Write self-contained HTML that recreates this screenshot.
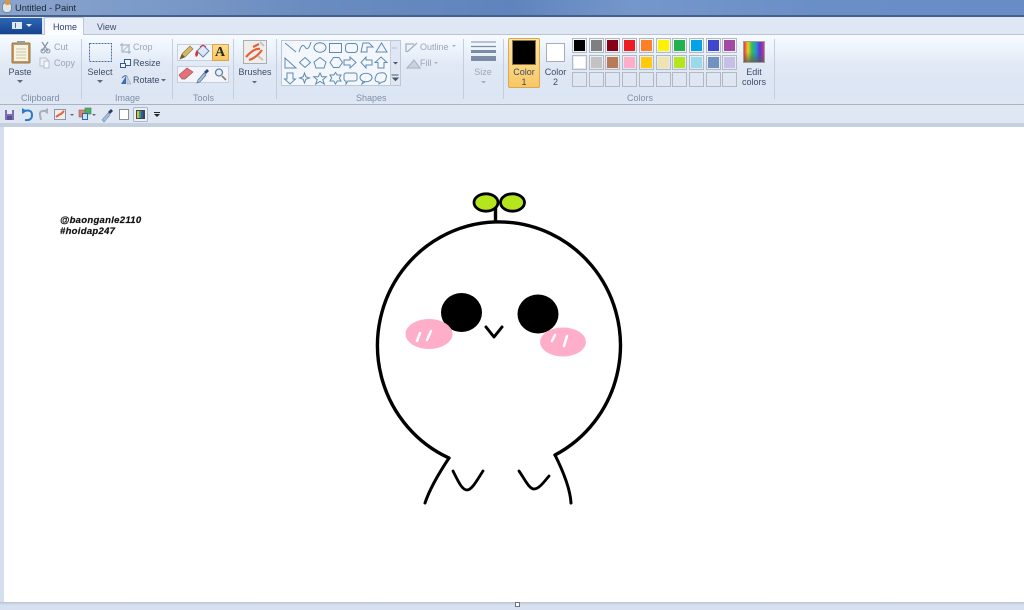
<!DOCTYPE html>
<html><head><meta charset="utf-8">
<style>
html,body{margin:0;padding:0;background:#d3deef;}
#r{position:relative;width:1024px;height:610px;overflow:hidden;font-family:"Liberation Sans",sans-serif;background:#d3deef;filter:blur(.3px);}
.a{position:absolute;}
.t{position:absolute;font-size:9px;color:#3c4c66;white-space:nowrap;line-height:10px;}
.c{text-align:center;}
.g{color:#9aa6b8;}
.l{position:absolute;font-size:9px;color:#7f8ea6;top:93px;line-height:10px;white-space:nowrap;}
.s{position:absolute;width:1px;top:39px;height:60px;background:#c3cedf;}
.sw{position:absolute;width:15px;height:15px;box-sizing:border-box;border:1px solid #b4b8bf;}
.sw i{position:absolute;left:1px;top:1px;width:11px;height:11px;border:0;display:block;}
svg{position:absolute;left:0;top:0;}
</style></head><body><div id="r">
<div class="a" style="left:0;top:0;width:1024px;height:16px;background:linear-gradient(90deg,#8ba4cc 0,#7b9ac8 15%,#6a8cc0 30%,#5f84bd 50%,#7597cb 62%,#6a8ec6 80%,#688cc6 100%);"></div>
<div class="a" style="left:0;top:15px;width:1024px;height:2px;background:#45608a;"></div>
<div class="a" style="left:0;top:17px;width:1024px;height:18px;background:#dfe7f4;"></div>
<div class="a" style="left:0;top:34px;width:1024px;height:1px;background:#b9c3d3;"></div>
<div class="a" style="left:0;top:35px;width:1024px;height:69px;background:linear-gradient(180deg,#f7fbff 0,#edf4fc 18%,#e0e8f5 45%,#dce5f3 85%,#dfe7f4 100%);"></div>
<div class="a" style="left:0;top:104px;width:1024px;height:1px;background:#a9b4c6;"></div>
<div class="a" style="left:0;top:105px;width:1024px;height:18px;background:#dfe7f3;"></div>
<div class="a" style="left:0;top:123px;width:1024px;height:4px;background:#c4cfe0;"></div>
<div class="a" style="left:0;top:127px;width:4px;height:483px;background:#d3deef;"></div>
<div class="a" style="left:4px;top:127px;width:1020px;height:475px;background:#fff;"></div>
<div class="a" style="left:0;top:602px;width:1024px;height:8px;background:linear-gradient(180deg,#b8c4d6,#d6e0f0 40%);"></div>
<div class="a" style="left:515px;top:602px;width:3px;height:3px;background:#fff;border:1px solid #6b7280;"></div>

<div class="t" style="left:15px;top:3px;font-size:9.300px;color:#1b2433;">Untitled - Paint</div>
<div class="a" style="left:2px;top:2px;width:8px;height:9px;background:#dfe5e8;border-radius:4px;border:1px solid #6f8f99;"></div>
<div class="a" style="left:5px;top:0;width:5px;height:5px;background:#d89a3a;border-radius:2px;"></div>

<div class="a" style="left:0;top:18px;width:42px;height:16px;background:linear-gradient(180deg,#2e66b4,#16438e);"></div>
<div class="a" style="left:12px;top:22px;width:10px;height:7px;background:#dfe8f5;"></div>
<div class="a" style="left:15px;top:23px;width:1px;height:5px;background:#3a68ad;"></div>
<div class="a" style="left:26px;top:24px;width:0;height:0;border:3px solid transparent;border-top:3px solid #e6eefa;"></div>
<div class="a" style="left:44px;top:17px;width:40px;height:18px;background:linear-gradient(180deg,#f4f8fd,#fbfdff);border:1px solid #bcc6d6;border-bottom:0;box-sizing:border-box;border-radius:2px 2px 0 0;"></div>
<div class="t" style="left:53px;top:22px;font-size:9px;color:#2c3f5e;">Home</div>
<div class="t" style="left:97px;top:22px;font-size:9px;color:#3c4c66;">View</div>

<!-- separators -->
<div class="s" style="left:81px;"></div><div class="s" style="left:172px;"></div><div class="s" style="left:233px;"></div><div class="s" style="left:276px;"></div><div class="s" style="left:463px;"></div><div class="s" style="left:503px;"></div><div class="s" style="left:774px;"></div>

<!-- labels -->
<div class="l" style="left:21px;">Clipboard</div><div class="l" style="left:115px;">Image</div><div class="l" style="left:193px;">Tools</div><div class="l" style="left:356px;">Shapes</div><div class="l" style="left:627px;">Colors</div>

<div class="t c" style="left:5px;width:30px;top:67px;">Paste</div>
<div class="t g" style="left:54px;top:42px;">Cut</div>
<div class="t g" style="left:54px;top:58px;">Copy</div>
<div class="t c" style="left:85px;width:30px;top:67px;">Select</div>
<div class="t g" style="left:133px;top:42px;">Crop</div>
<div class="t" style="left:133px;top:58px;">Resize</div>
<div class="t" style="left:133px;top:75px;">Rotate</div>
<div class="t c" style="left:235px;width:40px;top:67px;">Brushes</div>
<div class="t g" style="left:420px;top:42px;">Outline</div>
<div class="t g" style="left:420px;top:58px;">Fill</div>
<div class="t c g" style="left:468px;width:30px;top:67px;">Size</div>

<!-- tools box -->
<div class="a" style="left:177px;top:44px;width:52px;height:17px;background:#f1f5fb;border:1px solid #c5cedd;box-sizing:border-box;"></div>
<div class="a" style="left:177px;top:66px;width:52px;height:17px;background:#f1f5fb;border:1px solid #c5cedd;box-sizing:border-box;"></div>
<div class="a" style="left:212px;top:44px;width:17px;height:17px;background:linear-gradient(180deg,#fddc90,#f9c660);border:1px solid #d9a64a;box-sizing:border-box;"></div>
<div class="t" style="left:215px;top:44px;font:bold 14px/17px 'Liberation Serif',serif;color:#2a2a22;">A</div>

<!-- shapes box -->
<div class="a" style="left:281px;top:40px;width:120px;height:46px;background:#f3f7fc;border:1px solid #bcc7d8;box-sizing:border-box;"></div>
<div class="a" style="left:390px;top:41px;width:10px;height:44px;background:#dfe7f3;border-left:1px solid #c3cddd;box-sizing:border-box;"></div>

<!-- color 1/2 -->
<div class="a" style="left:508px;top:38px;width:32px;height:50px;background:linear-gradient(180deg,#fde4a6,#f9c764);border:1px solid #dba850;box-sizing:border-box;border-radius:2px;"></div>
<div class="a" style="left:512px;top:40px;width:24px;height:25px;background:#000;border:1px solid #8a7440;box-sizing:border-box;"></div>
<div class="t c" style="left:508px;width:32px;top:67px;line-height:10px;">Color<br>1</div>
<div class="a" style="left:546px;top:43px;width:19px;height:19px;background:#fff;border:1px solid #a9aeb6;box-sizing:border-box;"></div>
<div class="t c" style="left:540px;width:31px;top:67px;line-height:10px;">Color<br>2</div>

<!-- palette -->
<div class="sw" style="left:572px;top:38px;"><i style="background:#000"></i></div>
<div class="sw" style="left:589px;top:38px;"><i style="background:#7f7f7f"></i></div>
<div class="sw" style="left:605px;top:38px;"><i style="background:#880015"></i></div>
<div class="sw" style="left:622px;top:38px;"><i style="background:#ed1c24"></i></div>
<div class="sw" style="left:639px;top:38px;"><i style="background:#ff7f27"></i></div>
<div class="sw" style="left:656px;top:38px;"><i style="background:#fff200"></i></div>
<div class="sw" style="left:672px;top:38px;"><i style="background:#22b14c"></i></div>
<div class="sw" style="left:689px;top:38px;"><i style="background:#00a2e8"></i></div>
<div class="sw" style="left:706px;top:38px;"><i style="background:#3f48cc"></i></div>
<div class="sw" style="left:722px;top:38px;"><i style="background:#a349a4"></i></div>
<div class="sw" style="left:572px;top:55px;"><i style="background:#fff"></i></div>
<div class="sw" style="left:589px;top:55px;"><i style="background:#c3c3c3"></i></div>
<div class="sw" style="left:605px;top:55px;"><i style="background:#b97a57"></i></div>
<div class="sw" style="left:622px;top:55px;"><i style="background:#ffaec9"></i></div>
<div class="sw" style="left:639px;top:55px;"><i style="background:#ffc90e"></i></div>
<div class="sw" style="left:656px;top:55px;"><i style="background:#efe4b0"></i></div>
<div class="sw" style="left:672px;top:55px;"><i style="background:#b5e61d"></i></div>
<div class="sw" style="left:689px;top:55px;"><i style="background:#99d9ea"></i></div>
<div class="sw" style="left:706px;top:55px;"><i style="background:#7092be"></i></div>
<div class="sw" style="left:722px;top:55px;"><i style="background:#c8bfe7"></i></div>
<div class="sw" style="left:572px;top:72px;"></div><div class="sw" style="left:589px;top:72px;"></div><div class="sw" style="left:605px;top:72px;"></div><div class="sw" style="left:622px;top:72px;"></div><div class="sw" style="left:639px;top:72px;"></div><div class="sw" style="left:656px;top:72px;"></div><div class="sw" style="left:672px;top:72px;"></div><div class="sw" style="left:689px;top:72px;"></div><div class="sw" style="left:706px;top:72px;"></div><div class="sw" style="left:722px;top:72px;"></div>
<div class="a" style="left:743px;top:41px;width:22px;height:22px;box-sizing:border-box;border:1px solid #a79a9a;background:linear-gradient(180deg,rgba(255,255,255,0) 50%,rgba(90,90,90,.75)),linear-gradient(90deg,#e23a3a,#e6d02a,#2fbf4a,#2a8fe0,#5a35c8,#c83a9a);"></div>
<div class="t c" style="left:739px;width:30px;top:67px;line-height:10px;">Edit<br>colors</div>

<svg width="1024" height="610" viewBox="0 0 1024 610" fill="none">
<!-- paste -->
<rect x="12" y="43" width="18" height="20" rx="1" fill="#c49a63" stroke="#9b7440"/>
<rect x="14" y="45" width="14" height="16" fill="#f8f3df"/>
<rect x="17" y="41" width="8" height="4" fill="#a09a88"/>
<path d="M16 49h10M16 52h10M16 55h10M16 58h10" stroke="#c9c3a8"/>
<path d="M17 80l3 3 3-3z" fill="#5a6a80"/>
<path d="M42 42l6 9M48 42l-6 9" stroke="#8a97aa" stroke-width="1.300"/>
<circle cx="43" cy="51" r="2" stroke="#8a97aa"/><circle cx="48" cy="51" r="2" stroke="#8a97aa"/>
<path d="M40 58h6l2 2v6h-8z" stroke="#b6c0cf" fill="#eef2f8"/><path d="M44 61h5v7h-5z" stroke="#b6c0cf" fill="#f4f6fa"/>
<!-- select -->
<rect x="89.500" y="43.500" width="22" height="18" stroke="#4a6fa5" stroke-dasharray="2 1"/>
<path d="M97 80l3 3 3-3z" fill="#5a6a80"/>
<!-- crop -->
<path d="M122 43v9h9M120 45h9v9" stroke="#9aa8bb"/><path d="M123 51l7-7" stroke="#b6c0cf"/>
<!-- resize -->
<rect x="124.500" y="59.500" width="6" height="6" stroke="#2f5c9c" fill="#f3f7fc"/><rect x="120.500" y="63.500" width="5" height="4" stroke="#2f5c9c" fill="#f3f7fc"/>
<!-- rotate -->
<path d="M121 84l5-8v8z" fill="#3a6fb0"/><path d="M127 76l4 8h-4z" fill="#c9d2df" stroke="#8a97aa" stroke-width=".5"/><path d="M122 78q2-3 5-2" stroke="#3a6fb0"/>
<path d="M161 79l2.500 2.500 2.500-2.500z" fill="#5a6a80"/>
<!-- tools -->
<path d="M180 59l2-5 8-8 3 3-8 8z" fill="#d8b860" stroke="#8a7a50" stroke-width=".7"/><path d="M180 59l2-5 3 3z" fill="#6a5a40"/>
<path d="M197 51l6-6 6 6-6 6z" fill="#dfe8f4" stroke="#5f86b8"/><path d="M197 50q-3 4-1 7 3-2 2-5z" fill="#d2342c"/><path d="M200 47q3-3 6 0" stroke="#d2342c"/>
<path d="M179 75l8-7 6 4-8 7h-3z" fill="#e4707a" stroke="#a8555d" stroke-width=".7"/>
<path d="M198 80l6-7 2 2-6 7-3 1z" fill="#9fc4e4" stroke="#5a6a80" stroke-width=".7"/><path d="M204 72l3-3 2 2-3 3z" fill="#2a4a7c"/>
<circle cx="219" cy="72.500" r="3.500" stroke="#5e7fa8" fill="#e8f1fa" stroke-width="1.300"/><path d="M222 76l4 4" stroke="#8a7a60" stroke-width="1.600"/>
<!-- brushes -->
<rect x="243.500" y="40.500" width="23" height="23" fill="#f0eeea" stroke="#a9aeb6"/>
<path d="M246 57q8-9 14-8M249 60q7-2 13-10M253 47l6-3" stroke="#e2603a" stroke-width="2.200"/><path d="M260 42l4 4M258 56l5 4" stroke="#c3c3c3" stroke-width="2"/>
<path d="M252 81l2.500 2.500 2.500-2.500z" fill="#5a6a80"/>
<!-- shapes -->
<g stroke="#5f8bb0" stroke-width="1">
<path d="M285 43l11 9M299 52q3-10 6-5t6-5"/>
<ellipse cx="320" cy="47.500" rx="6" ry="4.800"/><rect x="329.500" y="43.500" width="12" height="9"/><rect x="345.500" y="43.500" width="12" height="9" rx="3"/>
<path d="M361 52l2-9h6l4 4h-6v5zM376 52l5.500-9 5.500 9z"/>
<path d="M285 68V58l11 10zM305 57.500l5.500 5-5.500 5-5.500-5zM320 57.500l6 4.500-2 6h-8l-2-6zM330 62.500l3.500-5h5.500l3.500 5-3.500 5h-5.500z"/>
<path d="M344 60h6v-3l6 5.500-6 5.500v-3h-6zM372 60h-6v-3l-5 5.500 5 5.500v-3h6zM381 57l6 5.500h-3v5.500h-6v-5.500h-3z"/>
<path d="M287 73h6v6h2.500l-5.500 5-5.500-5h2.500zM304.500 73l1.300 3.700 3.700 1.300-3.700 1.300-1.300 3.700-1.300-3.700-3.700-1.300 3.700-1.300z"/>
<path d="M320 73l1.800 3.700h4.500l-3.500 3 1.500 4.300-4.300-2.500-4.300 2.500 1.500-4.300-3.500-3h4.500z"/>
<path d="M335.500 72.500l1.700 2.500h3.800l-1.700 3 1.700 3h-3.800l-1.700 3-1.700-3h-3.800l1.700-3-1.700-3h3.800z"/>
<path d="M346 73h9a2 2 0 0 1 2 2v4a2 2 0 0 1-2 2h-7l-2 3v-3a2 2 0 0 1-2-2v-4a2 2 0 0 1 2-2z"/>
<ellipse cx="366" cy="77.500" rx="6" ry="4.300"/><path d="M363 81.500l-1 2.500 3-2"/>
<path d="M376 76q1-3 4-3 5-1 6 2 1 1 0 3 0 4-4 4l-3 2v-2q-4 0-4-3z"/>
</g>
<path d="M392 48h5" stroke="#b6c0cf"/><path d="M393 62l2.500 2.500 2.500-2.500z" fill="#4a5568"/><path d="M391.500 75h7M393 78l2.500 2.500 2.500-2.500z" stroke="#4a5568" fill="#4a5568"/>
<!-- outline fill -->
<path d="M406 52v-8h8M407 52l10-9" stroke="#a5b0c0" stroke-width="1.300"/>
<path d="M407 68l7-8 6 8z" fill="#c9d2df" stroke="#a5b0c0"/>
<path d="M452 45l2 2 2-2zM434 62l2 2 2-2zM481 81l2.500 2.500 2.500-2.500z" fill="#a5b0c0"/>
<!-- size -->
<path d="M471 42h25" stroke="#7d8ca5"/><path d="M471 46.500h25" stroke="#7d8ca5" stroke-width="1.200"/><path d="M471 51.500h25" stroke="#7d8ca5" stroke-width="3"/><path d="M471 58.500h25" stroke="#7d8ca5" stroke-width="5"/>
<!-- qat -->
<rect x="5" y="110" width="9" height="10" fill="#7a6fb5"/><rect x="7" y="110" width="5" height="4" fill="#e8e8f5"/><rect x="7" y="116" width="5" height="4" fill="#5a4f95"/>
<path d="M24 111q8-2 8 4t-7 5" stroke="#2a7ac8" stroke-width="2"/><path d="M22 108v6l5-3z" fill="#2a7ac8"/>
<path d="M46 111q-7-1-6 4t1 5" stroke="#a8b0bc" stroke-width="2"/><path d="M48 108v6l-5-3z" fill="#a8b0bc"/>
<rect x="54.500" y="109.500" width="11" height="10" fill="#f0eeea" stroke="#8a96a8"/><path d="M56 117q4-3 5-3l3-3" stroke="#e2603a" stroke-width="2"/>
<path d="M70 114l2 2 2-2zM92 114l2 2 2-2z" fill="#5a6a80"/>
<rect x="79" y="110" width="7" height="7" fill="#e0806a" stroke="#8a6a60" stroke-width=".6"/><rect x="85" y="108" width="6" height="6" fill="#4ab060" stroke="#4a7a5a" stroke-width=".6"/><rect x="82.500" y="113.500" width="5" height="6" fill="#cfe2f5" stroke="#2a6aa8"/>
<path d="M102 120l6-7 2 2-6 7z" fill="#9fc4e4" stroke="#7a8aa0" stroke-width=".6"/><path d="M108 112l3-3 2 2-3 3z" fill="#243e6c"/>
<rect x="119.500" y="109.500" width="9" height="10" fill="#fff" stroke="#8a8f98"/>
<rect x="133.500" y="107.500" width="14" height="14" rx="1" fill="#e8eff9" stroke="#a9b8ce"/>
<rect x="136" y="110" width="9" height="9" fill="#444"/><path d="M137 111h2v7h-2z" fill="#d8c030"/><path d="M139 111h2v7h-2z" fill="#30a860"/><path d="M141 111h2v7h-2z" fill="#3050c8"/>
<path d="M154 112.500h6" stroke="#222"/><path d="M154 114l3 3 3-3z" fill="#222"/>

<!-- drawing -->
<g stroke="#000" stroke-linecap="round" stroke-linejoin="round">
<path d="M449 458 A121.500 123.500 0 1 1 555 455" stroke-width="3.400"/>
<path d="M449 458Q431 485 425 503" stroke-width="3"/>
<path d="M555 455Q570 485 571 503" stroke-width="3"/>
<path d="M453 471C458 481 462 490 467 490C472 490 477 480 483 471" stroke-width="2.800"/>
<path d="M519 471C524 478 529 489 534 489C539 489 544 482 549 476" stroke-width="2.800"/>
<path d="M486 327L494 337 502 327" stroke-width="3"/>
<path d="M495.500 208V220" stroke-width="3.400"/>
<ellipse cx="486" cy="202.500" rx="12" ry="8.700" fill="#b5e61d" stroke-width="2.800"/>
<ellipse cx="512.500" cy="202.500" rx="12" ry="8.700" fill="#b5e61d" stroke-width="2.800"/>
</g>
<ellipse cx="461.500" cy="312.500" rx="20.500" ry="19.500" fill="#000"/>
<ellipse cx="538" cy="314" rx="20.500" ry="19.500" fill="#000"/>
<ellipse cx="429" cy="334" rx="23.500" ry="15" fill="#ffaec9"/>
<ellipse cx="563" cy="342" rx="23" ry="14.500" fill="#ffaec9"/>
<path d="M420 333L417 341M431 331L427 340M555 335L552 341M567 336L564 346" stroke="#fff" stroke-width="2.500" stroke-linecap="round"/>
</svg>

<div class="t" style="left:60px;top:215px;font-size:9.500px;font-weight:bold;font-style:italic;color:#111;line-height:11px;letter-spacing:.3px;-webkit-text-stroke:.2px #111;">@baonganle2110<br>#hoidap247</div>
</div></body></html>
